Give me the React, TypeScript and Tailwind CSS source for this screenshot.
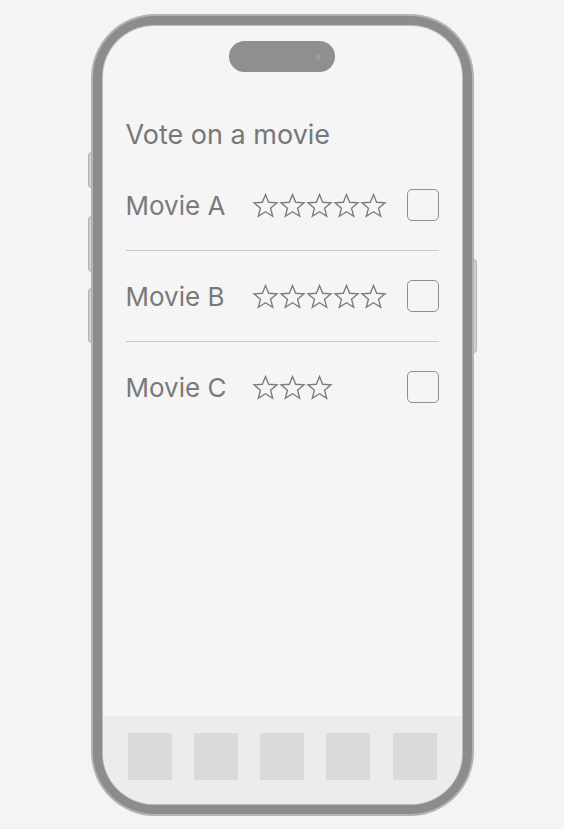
const movies = [
  { name: "Movie A", stars: 5 },
  { name: "Movie B", stars: 5 },
  { name: "Movie C", stars: 3 },
];

function Star() {
  return (
    <svg width="27" height="27" viewBox="0 0 24 24" className="shrink-0">
      <path
        d="M12 2.2l2.8 6.9 7.4.5-5.7 4.8 1.9 7.2L12 17.6l-6.4 4 1.9-7.2-5.7-4.8 7.4-.5z"
        fill="none"
        stroke="#7c7c7c"
        strokeWidth="1.2"
        strokeLinejoin="miter"
      />
    </svg>
  );
}

export default function App() {
  return (
    <div
      className="min-h-screen w-full bg-[#f4f4f4] flex justify-center pt-[14px]"
      style={{ fontFamily: "Inter, 'Liberation Sans', sans-serif" }}
    >
      <div className="relative">
        {/* side buttons */}
        <div className="absolute -left-[3px] top-[138px] h-[36px] w-[4px] rounded-l-sm bg-[#d0d0d0] border border-[#b4b4b4]" />
        <div className="absolute -left-[3px] top-[202px] h-[56px] w-[4px] rounded-l-sm bg-[#d0d0d0] border border-[#b4b4b4]" />
        <div className="absolute -left-[3px] top-[274px] h-[55px] w-[4px] rounded-l-sm bg-[#d0d0d0] border border-[#b4b4b4]" />
        <div className="absolute -right-[3px] top-[245px] h-[94px] w-[4px] rounded-r-sm bg-[#d0d0d0] border border-[#b4b4b4]" />

        <div className="relative w-[383px] h-[802px] rounded-[64px] bg-[#b3b3b3] p-[2px]">
          <div className="h-full w-full rounded-[62px] bg-[#8c8c8c] p-[9px]">
            <div className="h-full w-full rounded-[52px] bg-[#bdbdbd] p-[1px]">
              <div className="h-full w-full rounded-[51px] bg-[#f5f5f5] overflow-hidden flex flex-col">
                <div className="mt-[15px] mx-auto h-[31px] w-[106px] rounded-full bg-[#8f8f8f] flex items-center justify-end pr-[14px]">
                  <div className="h-[6px] w-[6px] rounded-full bg-[#9c9c9c]" />
                </div>

                <div className="pl-[23px] pr-[23px] pt-[48px] flex-1">
                  <h1 className="text-[27px] leading-[30px] text-[#777777] font-normal">
                    Vote on a movie
                  </h1>

                  <div className="mt-[10px]">
                    {movies.map((m, i) => (
                      <div key={m.name}>
                        {i > 0 && <div className="h-px bg-[#c8c8c8]" />}
                        <div className="h-[90px] flex items-center">
                          <span className="w-[126px] text-[26px] text-[#7a7a7a]">
                            {m.name}
                          </span>
                          <div className="flex flex-1">
                            {Array.from({ length: m.stars }).map((_, k) => (
                              <Star key={k} />
                            ))}
                          </div>
                          <div className="h-[32px] w-[32px] rounded-[5px] border-[1.5px] border-[#8f8f8f]" />
                        </div>
                      </div>
                    ))}
                  </div>
                </div>

                <div className="h-[88px] bg-[#ececec] flex justify-between px-[25px] pt-[17px]">
                  {[0, 1, 2, 3, 4].map((k) => (
                    <div key={k} className="h-[47px] w-[44px] bg-[#dadada]" />
                  ))}
                </div>
              </div>
            </div>
          </div>
        </div>
      </div>
    </div>
  );
}
